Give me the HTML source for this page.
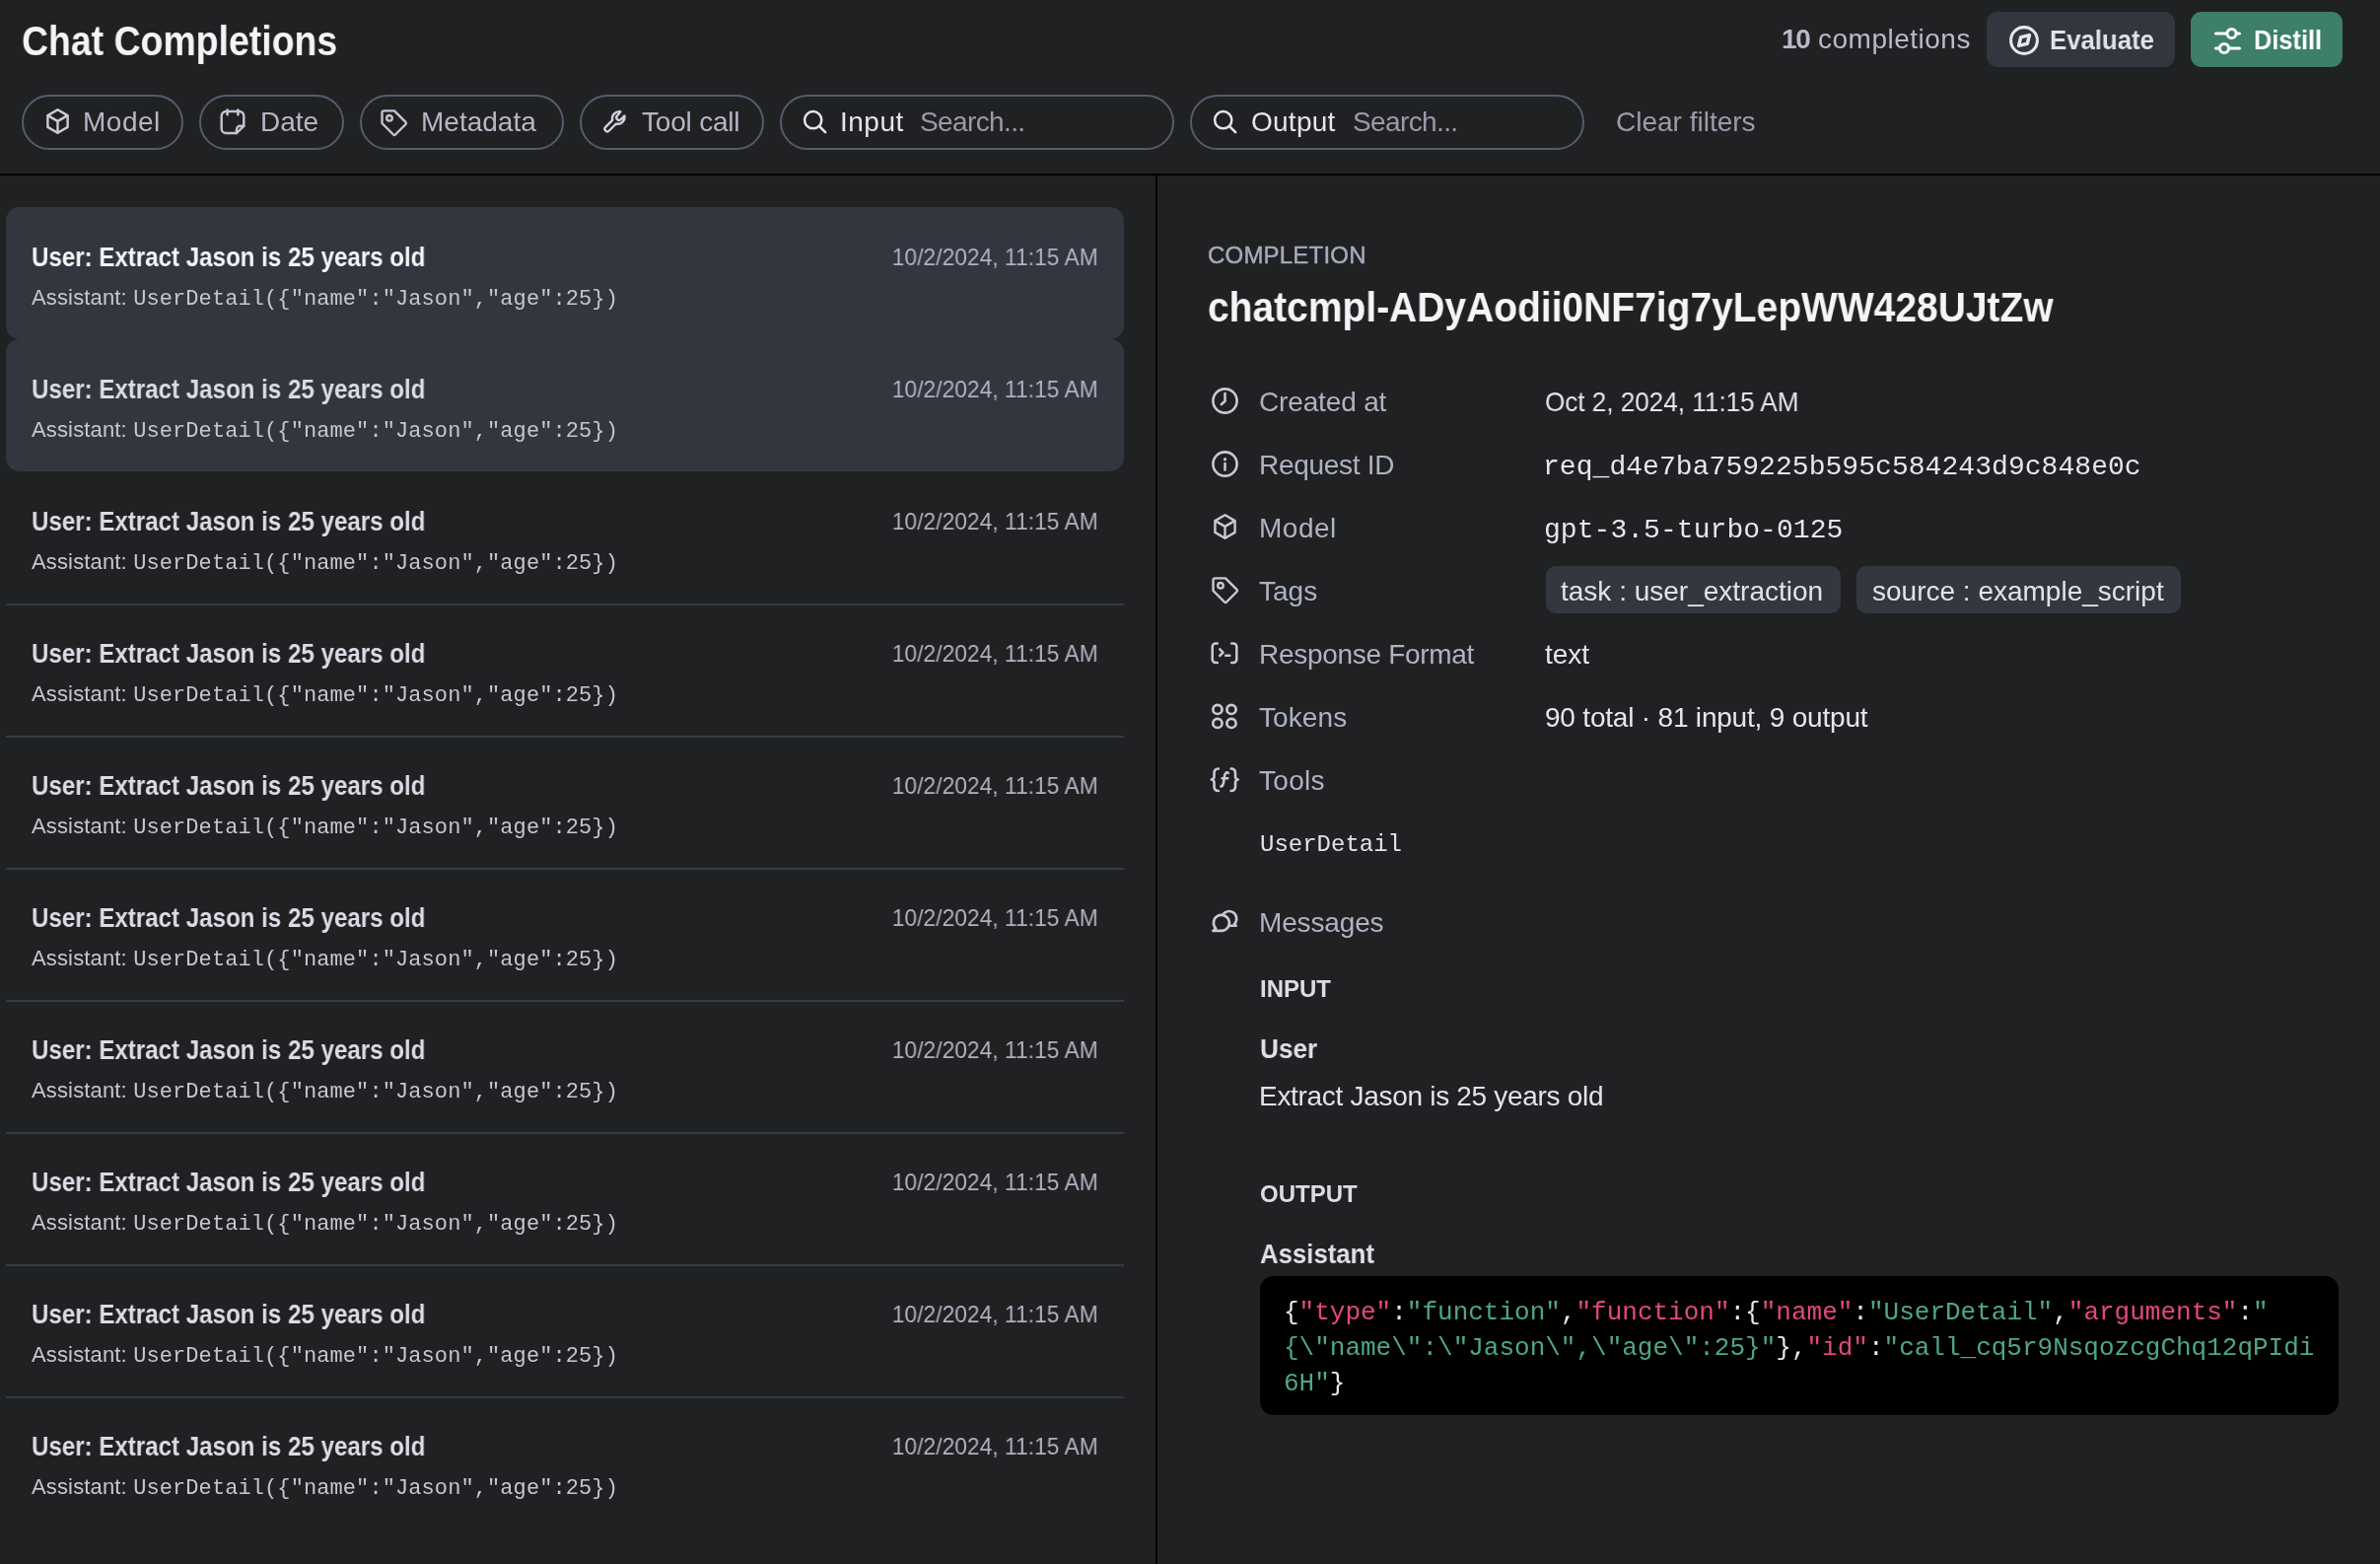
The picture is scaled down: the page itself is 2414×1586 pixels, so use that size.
<!DOCTYPE html>
<html><head><meta charset="utf-8"><style>
*{margin:0;padding:0;box-sizing:border-box}
html,body{width:2414px;height:1586px;overflow:hidden;background:#202123;}
body{position:relative;font-family:"Liberation Sans", sans-serif;}
.t{position:absolute;white-space:pre;line-height:1;will-change:transform;}
.s{font-family:"Liberation Sans", sans-serif;}
.m{font-family:"Liberation Mono", monospace;}
.abs{position:absolute;}
.pill{position:absolute;top:96px;height:56px;border:2px solid #595a6c;border-radius:28px;}
svg{position:absolute;overflow:visible;}
</style></head>
<body>
<div class="t s" style="left:22px;top:21.00px;font-size:42px;color:#f4f4f6;font-weight:700;transform:scaleX(0.891);transform-origin:0 0;">Chat Completions</div>
<div class="pill" style="left:22px;width:164px;"></div>
<div class="pill" style="left:202px;width:147px;"></div>
<div class="pill" style="left:365px;width:207px;"></div>
<div class="pill" style="left:588px;width:187px;"></div>
<div class="pill" style="left:791px;width:400px;"></div>
<div class="pill" style="left:1207px;width:400px;"></div>
<div class="t s" style="left:83.7px;top:110.00px;font-size:28px;color:#b6b6c6;letter-spacing:0.5px;">Model</div>
<div class="t s" style="left:263.7px;top:110.00px;font-size:28px;color:#b6b6c6;letter-spacing:-0.05px;">Date</div>
<div class="t s" style="left:427px;top:110.00px;font-size:28px;color:#b6b6c6;">Metadata</div>
<div class="t s" style="left:650.5px;top:110.00px;font-size:28px;color:#b6b6c6;letter-spacing:-0.2px;">Tool call</div>
<div class="t s" style="left:852px;top:110.00px;font-size:28px;color:#e4e4ec;letter-spacing:0.5px;">Input</div>
<div class="t s" style="left:932.5px;top:110.00px;font-size:28px;color:#9a9aaa;letter-spacing:-0.62px;">Search...</div>
<div class="t s" style="left:1269.3px;top:110.00px;font-size:28px;color:#e4e4ec;letter-spacing:0.25px;">Output</div>
<div class="t s" style="left:1372px;top:110.00px;font-size:28px;color:#9a9aaa;letter-spacing:-0.62px;">Search...</div>
<div class="t s" style="left:1639px;top:110.00px;font-size:28px;color:#9c9cac;">Clear filters</div>
<div class="t s" style="left:1806.5px;top:26.00px;font-size:28px;color:#b9b9c9;letter-spacing:0.5px;"><b style="letter-spacing:-1.2px">10</b> completions</div>
<div class="abs" style="left:2015px;top:12px;width:191px;height:56px;border-radius:11px;background:#34363f;"></div>
<div class="t s" style="left:2079px;top:27.00px;font-size:28px;color:#e2e2ec;font-weight:700;transform:scaleX(0.92);transform-origin:0 0;">Evaluate</div>
<div class="abs" style="left:2222px;top:12px;width:154px;height:56px;border-radius:11px;background:#3d7f69;"></div>
<div class="t s" style="left:2285.5px;top:27.00px;font-size:28px;color:#ffffff;font-weight:700;transform:scaleX(0.905);transform-origin:0 0;">Distill</div>
<div class="abs" style="left:0;top:176px;width:2414px;height:2px;background:#000;"></div>
<div class="abs" style="left:1172px;top:178px;width:2px;height:1408px;background:#000;"></div>
<svg style="left:46.5px;top:110px;width:23px;height:26px" viewBox="0 0 23 26" fill="none" stroke="#cdcdd9" stroke-width="2.4" stroke-linecap="round" stroke-linejoin="round"><path d="M11.5 1.3 L21.6 7.1 V18.9 L11.5 24.7 L1.4 18.9 V7.1 Z"/><path d="M1.9 7.4 L11.5 12.9 L21.1 7.4 M11.5 12.9 V24.5"/></svg>
<svg style="left:223px;top:110.5px;width:26px;height:26px" viewBox="0 0 26 26" fill="none" stroke="#c4c4d2" stroke-width="2.4" stroke-linecap="round" stroke-linejoin="round"><path d="M17 24 H6.2 A4.5 4.5 0 0 1 1.7 19.5 V6.5 A4.5 4.5 0 0 1 6.2 2 H19.8 A4.5 4.5 0 0 1 24.3 6.5 V16.8 L17 24"/><path d="M7.6 0.6 V5.2 M18.4 0.6 V5.2" stroke-width="2.6"/><path d="M24.3 16.8 H20.5 A3.5 3.5 0 0 0 17 20.3 V24"/></svg>
<svg style="left:385.5px;top:110.8px;width:27px;height:27px" viewBox="0 0 27 27" fill="none" stroke="#c4c4d2" stroke-width="2.4" stroke-linecap="round" stroke-linejoin="round"><path d="M3.5 1.4 H14 L25.5 12.9 Q26.5 14 25.5 15 L15 25.5 Q14 26.5 13 25.5 L1.5 14 V3.5 Q1.5 1.4 3.5 1.4 Z"/><circle cx="9" cy="8.8" r="2.8"/></svg>
<svg style="left:612px;top:111px;width:24px;height:24px" viewBox="0 0 24 24" fill="none" stroke="#d0d0dc" stroke-width="2.4" stroke-linecap="round" stroke-linejoin="round"><path d="M17.3 2.3 A7 7 0 0 0 9.2 10.8 L2.2 17.8 A2.6 2.6 0 0 0 5.9 21.5 L12.9 14.5 A7 7 0 0 0 21.4 6.4 L17.8 10 A2.6 2.6 0 0 1 14 6.4 Z"/></svg>
<svg style="left:815px;top:112px;width:24px;height:24px" viewBox="0 0 24 24" fill="none" stroke="#e4e4ec" stroke-width="2.5" stroke-linecap="round" stroke-linejoin="round"><circle cx="9.7" cy="9.7" r="8.6"/><path d="M16 16 L22.2 22.2"/></svg>
<svg style="left:1231px;top:112px;width:24px;height:24px" viewBox="0 0 24 24" fill="none" stroke="#e4e4ec" stroke-width="2.5" stroke-linecap="round" stroke-linejoin="round"><circle cx="9.7" cy="9.7" r="8.6"/><path d="M16 16 L22.2 22.2"/></svg>
<svg style="left:2038px;top:26px;width:30px;height:30px" viewBox="0 0 30 30" fill="none" stroke="#e6e6ee" stroke-width="3.1" stroke-linecap="round" stroke-linejoin="round"><circle cx="15" cy="15" r="13.4"/><path d="M20.4 9.6 L18.3 18.3 L9.6 20.4 L11.7 11.7 Z" stroke-width="3.5"/></svg>
<svg style="left:2246px;top:26.5px;width:27px;height:29px" viewBox="0 0 27 29" fill="none" stroke="#ffffff" stroke-width="3.0" stroke-linecap="round" stroke-linejoin="round"><path d="M1.5 7 H12.6 M22.4 7 H25.5"/><circle cx="17.5" cy="7" r="4.6"/><path d="M1.5 22 H5 M14.9 22 H25.5"/><circle cx="10" cy="22" r="4.6"/></svg>
<div class="abs" style="left:6px;top:210px;width:1134px;height:134px;border-radius:14px;background:#34363f;"></div>
<div class="t s" style="left:32px;top:248.00px;font-size:27px;color:#f6f6f8;font-weight:700;transform:scaleX(0.893);transform-origin:0 0;">User: Extract Jason is 25 years old</div>
<div class="t s" style="left:31.5px;top:291.00px;font-size:22px;color:#c6c6d2;letter-spacing:0.15px;">Assistant: <span class="m" style="letter-spacing:0.09px">UserDetail({&quot;name&quot;:&quot;Jason&quot;,&quot;age&quot;:25})</span></div>
<div class="t s" style="right:1299.9px;top:249.00px;font-size:24px;color:#b1b1c1;transform:scaleX(0.951);transform-origin:100% 0;">10/2/2024, 11:15 AM</div>
<div class="abs" style="left:6px;top:344px;width:1134px;height:134px;border-radius:14px;background:#34363f;"></div>
<div class="t s" style="left:32px;top:382.00px;font-size:27px;color:#dcdce6;font-weight:700;transform:scaleX(0.893);transform-origin:0 0;">User: Extract Jason is 25 years old</div>
<div class="t s" style="left:31.5px;top:425.00px;font-size:22px;color:#c6c6d2;letter-spacing:0.15px;">Assistant: <span class="m" style="letter-spacing:0.09px">UserDetail({&quot;name&quot;:&quot;Jason&quot;,&quot;age&quot;:25})</span></div>
<div class="t s" style="right:1299.9px;top:383.00px;font-size:24px;color:#b1b1c1;transform:scaleX(0.951);transform-origin:100% 0;">10/2/2024, 11:15 AM</div>
<div class="abs" style="left:6px;top:612px;width:1134px;height:2px;background:#373945;"></div>
<div class="t s" style="left:32px;top:516.00px;font-size:27px;color:#dcdce6;font-weight:700;transform:scaleX(0.893);transform-origin:0 0;">User: Extract Jason is 25 years old</div>
<div class="t s" style="left:31.5px;top:559.00px;font-size:22px;color:#c6c6d2;letter-spacing:0.15px;">Assistant: <span class="m" style="letter-spacing:0.09px">UserDetail({&quot;name&quot;:&quot;Jason&quot;,&quot;age&quot;:25})</span></div>
<div class="t s" style="right:1299.9px;top:517.00px;font-size:24px;color:#b1b1c1;transform:scaleX(0.951);transform-origin:100% 0;">10/2/2024, 11:15 AM</div>
<div class="abs" style="left:6px;top:746px;width:1134px;height:2px;background:#373945;"></div>
<div class="t s" style="left:32px;top:650.00px;font-size:27px;color:#dcdce6;font-weight:700;transform:scaleX(0.893);transform-origin:0 0;">User: Extract Jason is 25 years old</div>
<div class="t s" style="left:31.5px;top:693.00px;font-size:22px;color:#c6c6d2;letter-spacing:0.15px;">Assistant: <span class="m" style="letter-spacing:0.09px">UserDetail({&quot;name&quot;:&quot;Jason&quot;,&quot;age&quot;:25})</span></div>
<div class="t s" style="right:1299.9px;top:651.00px;font-size:24px;color:#b1b1c1;transform:scaleX(0.951);transform-origin:100% 0;">10/2/2024, 11:15 AM</div>
<div class="abs" style="left:6px;top:880px;width:1134px;height:2px;background:#373945;"></div>
<div class="t s" style="left:32px;top:784.00px;font-size:27px;color:#dcdce6;font-weight:700;transform:scaleX(0.893);transform-origin:0 0;">User: Extract Jason is 25 years old</div>
<div class="t s" style="left:31.5px;top:827.00px;font-size:22px;color:#c6c6d2;letter-spacing:0.15px;">Assistant: <span class="m" style="letter-spacing:0.09px">UserDetail({&quot;name&quot;:&quot;Jason&quot;,&quot;age&quot;:25})</span></div>
<div class="t s" style="right:1299.9px;top:785.00px;font-size:24px;color:#b1b1c1;transform:scaleX(0.951);transform-origin:100% 0;">10/2/2024, 11:15 AM</div>
<div class="abs" style="left:6px;top:1014px;width:1134px;height:2px;background:#373945;"></div>
<div class="t s" style="left:32px;top:918.00px;font-size:27px;color:#dcdce6;font-weight:700;transform:scaleX(0.893);transform-origin:0 0;">User: Extract Jason is 25 years old</div>
<div class="t s" style="left:31.5px;top:961.00px;font-size:22px;color:#c6c6d2;letter-spacing:0.15px;">Assistant: <span class="m" style="letter-spacing:0.09px">UserDetail({&quot;name&quot;:&quot;Jason&quot;,&quot;age&quot;:25})</span></div>
<div class="t s" style="right:1299.9px;top:919.00px;font-size:24px;color:#b1b1c1;transform:scaleX(0.951);transform-origin:100% 0;">10/2/2024, 11:15 AM</div>
<div class="abs" style="left:6px;top:1148px;width:1134px;height:2px;background:#373945;"></div>
<div class="t s" style="left:32px;top:1052.00px;font-size:27px;color:#dcdce6;font-weight:700;transform:scaleX(0.893);transform-origin:0 0;">User: Extract Jason is 25 years old</div>
<div class="t s" style="left:31.5px;top:1095.00px;font-size:22px;color:#c6c6d2;letter-spacing:0.15px;">Assistant: <span class="m" style="letter-spacing:0.09px">UserDetail({&quot;name&quot;:&quot;Jason&quot;,&quot;age&quot;:25})</span></div>
<div class="t s" style="right:1299.9px;top:1053.00px;font-size:24px;color:#b1b1c1;transform:scaleX(0.951);transform-origin:100% 0;">10/2/2024, 11:15 AM</div>
<div class="abs" style="left:6px;top:1282px;width:1134px;height:2px;background:#373945;"></div>
<div class="t s" style="left:32px;top:1186.00px;font-size:27px;color:#dcdce6;font-weight:700;transform:scaleX(0.893);transform-origin:0 0;">User: Extract Jason is 25 years old</div>
<div class="t s" style="left:31.5px;top:1229.00px;font-size:22px;color:#c6c6d2;letter-spacing:0.15px;">Assistant: <span class="m" style="letter-spacing:0.09px">UserDetail({&quot;name&quot;:&quot;Jason&quot;,&quot;age&quot;:25})</span></div>
<div class="t s" style="right:1299.9px;top:1187.00px;font-size:24px;color:#b1b1c1;transform:scaleX(0.951);transform-origin:100% 0;">10/2/2024, 11:15 AM</div>
<div class="abs" style="left:6px;top:1416px;width:1134px;height:2px;background:#373945;"></div>
<div class="t s" style="left:32px;top:1320.00px;font-size:27px;color:#dcdce6;font-weight:700;transform:scaleX(0.893);transform-origin:0 0;">User: Extract Jason is 25 years old</div>
<div class="t s" style="left:31.5px;top:1363.00px;font-size:22px;color:#c6c6d2;letter-spacing:0.15px;">Assistant: <span class="m" style="letter-spacing:0.09px">UserDetail({&quot;name&quot;:&quot;Jason&quot;,&quot;age&quot;:25})</span></div>
<div class="t s" style="right:1299.9px;top:1321.00px;font-size:24px;color:#b1b1c1;transform:scaleX(0.951);transform-origin:100% 0;">10/2/2024, 11:15 AM</div>
<div class="t s" style="left:32px;top:1454.00px;font-size:27px;color:#dcdce6;font-weight:700;transform:scaleX(0.893);transform-origin:0 0;">User: Extract Jason is 25 years old</div>
<div class="t s" style="left:31.5px;top:1497.00px;font-size:22px;color:#c6c6d2;letter-spacing:0.15px;">Assistant: <span class="m" style="letter-spacing:0.09px">UserDetail({&quot;name&quot;:&quot;Jason&quot;,&quot;age&quot;:25})</span></div>
<div class="t s" style="right:1299.9px;top:1455.00px;font-size:24px;color:#b1b1c1;transform:scaleX(0.951);transform-origin:100% 0;">10/2/2024, 11:15 AM</div>
<div class="t s" style="left:1225px;top:247.00px;font-size:24px;color:#a9a9bd;letter-spacing:0.2px;-webkit-text-stroke:0.45px #a9a9bd;">COMPLETION</div>
<div class="t s" style="left:1225px;top:291.00px;font-size:42px;color:#f5f5f7;font-weight:700;transform:scaleX(0.928);transform-origin:0 0;">chatcmpl-ADyAodii0NF7ig7yLepWW428UJtZw</div>
<div class="t s" style="left:1277px;top:394.00px;font-size:28px;color:#b1b1c3;letter-spacing:-0.15px;">Created at</div>
<div class="t s" style="left:1277px;top:458.00px;font-size:28px;color:#b1b1c3;letter-spacing:-0.3px;">Request ID</div>
<div class="t s" style="left:1277px;top:522.00px;font-size:28px;color:#b1b1c3;letter-spacing:0.5px;">Model</div>
<div class="t s" style="left:1277px;top:586.00px;font-size:28px;color:#b1b1c3;">Tags</div>
<div class="t s" style="left:1277px;top:650.00px;font-size:28px;color:#b1b1c3;letter-spacing:-0.3px;">Response Format</div>
<div class="t s" style="left:1277px;top:714.00px;font-size:28px;color:#b1b1c3;letter-spacing:0.1px;">Tokens</div>
<div class="t s" style="left:1277px;top:778.00px;font-size:28px;color:#b1b1c3;letter-spacing:0.3px;">Tools</div>
<div class="t s" style="left:1567px;top:394.00px;font-size:28px;color:#e6e6ec;transform:scaleX(0.931);transform-origin:0 0;">Oct 2, 2024, 11:15 AM</div>
<div class="t m" style="left:1565px;top:460.00px;font-size:28px;color:#e6e6ec;letter-spacing:0.05px;">req_d4e7ba759225b595c584243d9c848e0c</div>
<div class="t m" style="left:1565.5px;top:524.00px;font-size:28px;color:#e6e6ec;letter-spacing:0.05px;">gpt-3.5-turbo-0125</div>
<div class="abs" style="left:1568px;top:574px;width:299px;height:48px;border-radius:10px;background:#35373f;"></div>
<div class="abs" style="left:1883px;top:574px;width:329px;height:48px;border-radius:10px;background:#35373f;"></div>
<div class="t s" style="left:1583px;top:586.00px;font-size:28px;color:#e2e2ea;">task : user_extraction</div>
<div class="t s" style="left:1898.5px;top:586.00px;font-size:28px;color:#e2e2ea;">source : example_script</div>
<div class="t s" style="left:1567px;top:650.00px;font-size:28px;color:#e6e6ec;">text</div>
<div class="t s" style="left:1567px;top:714.00px;font-size:28px;color:#e6e6ec;letter-spacing:-0.2px;">90 total · 81 input, 9 output</div>
<div class="t m" style="left:1278px;top:845.00px;font-size:24px;color:#e2e2ea;">UserDetail</div>
<div class="t s" style="left:1277px;top:922.00px;font-size:28px;color:#b1b1c3;letter-spacing:-0.15px;">Messages</div>
<div class="t s" style="left:1278px;top:991.00px;font-size:24px;color:#dcdce4;font-weight:700;">INPUT</div>
<div class="t s" style="left:1277.5px;top:1050.00px;font-size:28px;color:#e0e0e8;font-weight:700;transform:scaleX(0.935);transform-origin:0 0;">User</div>
<div class="t s" style="left:1277px;top:1098.00px;font-size:28px;color:#e2e2ea;letter-spacing:-0.3px;">Extract Jason is 25 years old</div>
<div class="t s" style="left:1278px;top:1199.00px;font-size:24px;color:#dcdce4;font-weight:700;">OUTPUT</div>
<div class="t s" style="left:1278.3px;top:1258.00px;font-size:28px;color:#e0e0e8;font-weight:700;transform:scaleX(0.92);transform-origin:0 0;">Assistant</div>
<div class="abs" style="left:1278px;top:1294px;width:1094px;height:141px;border-radius:14px;background:#000;"></div>
<div class="t m" style="left:1301.5px;top:1318.00px;font-size:26px;color:#e8e8ea;"><span style="color:#e8e8ea">{</span><span style="color:#e2487f">&quot;type&quot;</span><span style="color:#e8e8ea">:</span><span style="color:#4fa783">&quot;function&quot;</span><span style="color:#e8e8ea">,</span><span style="color:#e2487f">&quot;function&quot;</span><span style="color:#e8e8ea">:{</span><span style="color:#e2487f">&quot;name&quot;</span><span style="color:#e8e8ea">:</span><span style="color:#4fa783">&quot;UserDetail&quot;</span><span style="color:#e8e8ea">,</span><span style="color:#e2487f">&quot;arguments&quot;</span><span style="color:#e8e8ea">:</span><span style="color:#4fa783">&quot;</span></div>
<div class="t m" style="left:1301.5px;top:1354.00px;font-size:26px;color:#e8e8ea;"><span style="color:#4fa783">{\&quot;name\&quot;:\&quot;Jason\&quot;,\&quot;age\&quot;:25}&quot;</span><span style="color:#e8e8ea">},</span><span style="color:#e2487f">&quot;id&quot;</span><span style="color:#e8e8ea">:</span><span style="color:#4fa783">&quot;call_cq5r9NsqozcgChq12qPIdi</span></div>
<div class="t m" style="left:1301.5px;top:1390.00px;font-size:26px;color:#e8e8ea;"><span style="color:#4fa783">6H&quot;</span><span style="color:#e8e8ea">}</span></div>
<svg style="left:1228.5px;top:392.5px;width:27px;height:27px" viewBox="0 0 27 27" fill="none" stroke="#c9c9d6" stroke-width="2.6" stroke-linecap="round" stroke-linejoin="round"><circle cx="13.5" cy="13.5" r="12.1"/><path d="M13.5 6 V13.7 L9.9 17"/></svg>
<svg style="left:1228.5px;top:456.5px;width:27px;height:27px" viewBox="0 0 27 27" fill="none" stroke="#c9c9d6" stroke-width="2.6" stroke-linecap="round" stroke-linejoin="round"><circle cx="13.5" cy="13.5" r="12.1"/><path d="M13.5 13 V19.5"/><path d="M13.5 8.6 V8.8" stroke-width="3.2"/></svg>
<svg style="left:1231px;top:520.5px;width:23px;height:26px" viewBox="0 0 23 26" fill="none" stroke="#c9c9d6" stroke-width="2.4" stroke-linecap="round" stroke-linejoin="round"><path d="M11.5 1.3 L21.6 7.1 V18.9 L11.5 24.7 L1.4 18.9 V7.1 Z"/><path d="M1.9 7.4 L11.5 12.9 L21.1 7.4 M11.5 12.9 V24.5"/></svg>
<svg style="left:1228.5px;top:584.8px;width:27px;height:27px" viewBox="0 0 27 27" fill="none" stroke="#c9c9d6" stroke-width="2.4" stroke-linecap="round" stroke-linejoin="round"><path d="M3.5 1.4 H14 L25.5 12.9 Q26.5 14 25.5 15 L15 25.5 Q14 26.5 13 25.5 L1.5 14 V3.5 Q1.5 1.4 3.5 1.4 Z"/><circle cx="9" cy="8.8" r="2.8"/></svg>
<svg style="left:1228px;top:651px;width:28px;height:23px" viewBox="0 0 28 23" fill="none" stroke="#c9c9d6" stroke-width="2.5" stroke-linecap="round" stroke-linejoin="round"><path d="M6.8 1.4 H5 A3.3 3.3 0 0 0 1.7 4.7 V17.8 A3.3 3.3 0 0 0 5 21.1 H6.8"/><path d="M21.2 1.4 H23 A3.3 3.3 0 0 1 26.3 4.7 V17.8 A3.3 3.3 0 0 1 23 21.1 H21.2"/><path d="M9.2 7.4 L12.6 10.7 L9.2 14 M15.2 13.8 H19.3"/></svg>
<svg style="left:1228px;top:712.5px;width:28px;height:28px" viewBox="0 0 28 28" fill="none" stroke="#c9c9d6" stroke-width="2.7" stroke-linecap="round" stroke-linejoin="round"><circle cx="6.9" cy="6.4" r="4.6"/><circle cx="21" cy="6.4" r="4.6"/><circle cx="6.9" cy="20.4" r="4.6"/><circle cx="21" cy="20.4" r="4.6"/></svg>
<svg style="left:1226.5px;top:777.5px;width:31px;height:26px" viewBox="0 0 31 26" fill="none" stroke="#c9c9d6" stroke-width="2.6" stroke-linecap="round" stroke-linejoin="round"><path d="M8.9 1.5 Q4.5 1.5 4.5 6 V9.5 Q4.5 12 1.8 12.5 Q4.5 13 4.5 15.5 V19.5 Q4.5 24 8.9 24"/><path d="M21.6 1.5 Q26 1.5 26 6 V9.5 Q26 12 28.7 12.5 Q26 13 26 15.5 V19.5 Q26 24 21.6 24"/><path d="M18.8 5.8 Q16 4.2 15.1 8.6 L14.1 15.2 Q13.4 19.2 11.4 19.6 M12.6 11.2 H18.2"/></svg>
<svg style="left:1228.5px;top:921px;width:28px;height:26px" viewBox="0 0 28 26" fill="none" stroke="#c9c9d6" stroke-width="2.6" stroke-linecap="round" stroke-linejoin="round"><path d="M10.2 10.6 A7.5 7.5 0 1 1 23 15.9 L24.7 17.8 H12"/><path d="M4.24 20.56 L1.3 22.9 H9.9 A8 8 0 1 0 4.24 20.56 Z" fill="#202123"/></svg>

</body></html>
